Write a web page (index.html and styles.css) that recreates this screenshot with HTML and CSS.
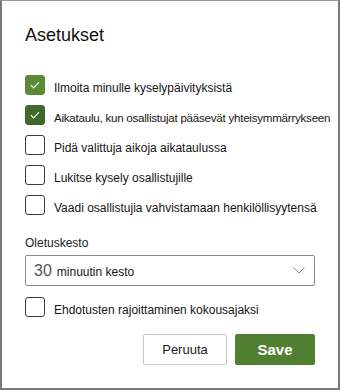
FILE: index.html
```html
<!DOCTYPE html>
<html lang="fi">
<head>
    <meta charset="UTF-8">
    <meta name="viewport" content="width=device-width, initial-scale=1.0">
    <title>Asetukset</title>
    <link rel="stylesheet" href="styles.css">
</head>
<body>
    <div class="dialog">
        <h1>Asetukset</h1>
        <div class="options">
            <label class="option">
                <span class="box checked"><svg viewBox="0 0 20 20"><path d="M5.5 10.2l3 3 6-6.4"/></svg></span>
                <span class="text">Ilmoita minulle kyselypäivityksistä</span>
            </label>
            <label class="option">
                <span class="box checked dark"><svg viewBox="0 0 20 20"><path d="M5.5 10.2l3 3 6-6.4"/></svg></span>
                <span class="text tight">Aikataulu, kun osallistujat pääsevät yhteisymmärrykseen</span>
            </label>
            <label class="option">
                <span class="box"></span>
                <span class="text">Pidä valittuja aikoja aikataulussa</span>
            </label>
            <label class="option">
                <span class="box"></span>
                <span class="text">Lukitse kysely osallistujille</span>
            </label>
            <label class="option">
                <span class="box"></span>
                <span class="text">Vaadi osallistujia vahvistamaan henkilöllisyytensä</span>
            </label>
        </div>

        <div class="field-label">Oletuskesto</div>
        <div class="select">
            <span class="num">30</span>
            <span class="unit">minuutin kesto</span>
            <svg class="chevron" viewBox="0 0 12 7"><path d="M0.5 0.5l5.5 5.5 5.5-5.5"/></svg>
        </div>

        <label class="option limit">
            <span class="box"></span>
            <span class="text">Ehdotusten rajoittaminen kokousajaksi</span>
        </label>

        <div class="actions">
            <button class="btn cancel">Peruuta</button>
            <button class="btn save">Save</button>
        </div>
    </div>
</body>
</html>
```

FILE: styles.css
```css
body {
    margin: 0;
    font-family: "Liberation Sans", Arial, sans-serif;
    color: #1a1a1a;
    background: #fff;
}
.dialog {
    box-sizing: border-box;
    width: 340px;
    height: 390px;
    border: 2px solid #7a7a7a;
    border-top: 1px solid #9a9a9a;
    padding: 22px 23px 0;
}
h1 {
    font-size: 18px;
    font-weight: normal;
    line-height: 24px;
    margin: 0 0 28px;
    color: #111;
}
.options {
    display: flex;
    flex-direction: column;
    gap: 10px;
}
.option {
    display: flex;
    align-items: flex-start;
    height: 20px;
}
.box {
    box-sizing: border-box;
    flex: none;
    width: 20px;
    height: 20px;
    border: 1px solid #3a3a3a;
    border-radius: 3px;
    margin-right: 9px;
    display: flex;
    align-items: center;
    justify-content: center;
}
.box.checked {
    background: #5a8a37;
    border-color: #5a8a37;
}
.box.checked.dark {
    background: #41682b;
    border-color: #41682b;
}
.box svg {
    width: 20px;
    height: 20px;
}
.box svg path {
    fill: none;
    stroke: #e8f0e2;
    stroke-width: 1.4;
}
.text {
    font-size: 12px;
    line-height: 20px;
    padding-top: 3px;
    white-space: nowrap;
    color: #151515;
}
.text.tight {
    font-size: 11.6px;
    letter-spacing: -0.25px;
}
.field-label {
    font-size: 12px;
    line-height: 16px;
    margin-top: 20px;
    color: #222;
}
.select {
    box-sizing: border-box;
    height: 31px;
    margin-top: 4px;
    border: 1px solid #8a8a8a;
    border-radius: 2px;
    display: flex;
    align-items: center;
    padding: 0 8px;
}
.num {
    font-size: 16px;
    color: #555;
    margin-right: 5px;
}
.unit {
    font-size: 12px;
    padding-top: 3px;
    color: #151515;
}
.chevron {
    margin-left: auto;
    width: 12px;
    height: 7px;
    margin-right: 1px;
}
.chevron path {
    fill: none;
    stroke: #8a8a8a;
    stroke-width: 1;
}
.limit {
    margin-top: 11px;
}
.actions {
    display: flex;
    justify-content: flex-end;
    gap: 8px;
    margin-top: 17px;
}
.btn {
    box-sizing: border-box;
    height: 31px;
    border-radius: 2px;
    font-family: "Liberation Sans", Arial, sans-serif;
    cursor: pointer;
}
.cancel {
    width: 84px;
    background: #fff;
    border: 1px solid #c8c8c8;
    font-size: 13px;
    color: #1a1a1a;
}
.save {
    width: 80px;
    background: #507f32;
    border: 1px solid #507f32;
    color: #fff;
    font-size: 15px;
    font-weight: bold;
}
```
